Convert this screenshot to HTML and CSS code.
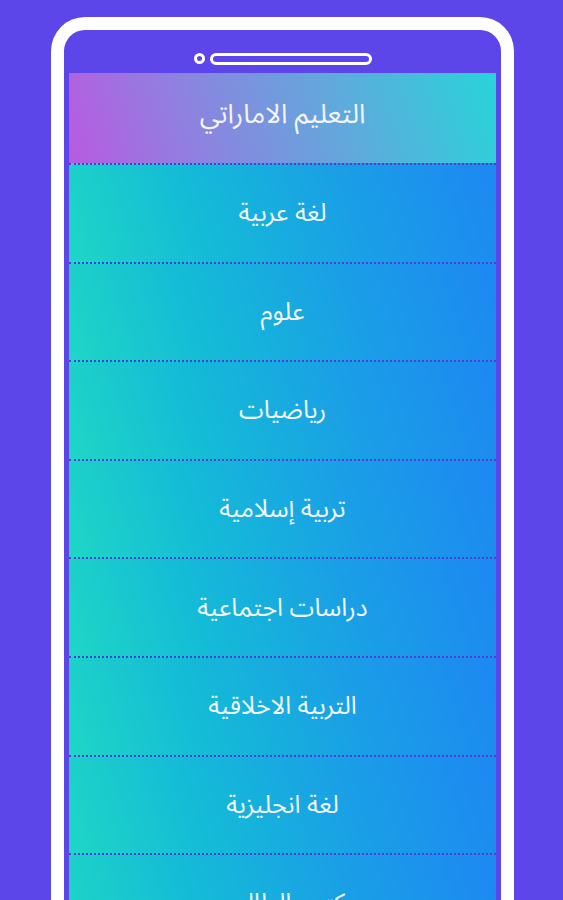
FILE: index.html
```html
<!DOCTYPE html>
<html lang="ar">
<head>
  <meta charset="utf-8">
  <title>التعليم الاماراتي</title>
  <link rel="stylesheet" href="styles.css">
</head>
<body>
  <div class="phone">
    <div class="speaker">
      <span class="camera"></span>
      <span class="grille"></span>
    </div>
    <div class="screen">
      <div class="header">التعليم الاماراتي</div>
      <div class="subject">لغة عربية</div>
      <div class="subject">علوم</div>
      <div class="subject">رياضيات</div>
      <div class="subject">تربية إسلامية</div>
      <div class="subject">دراسات اجتماعية</div>
      <div class="subject">التربية الاخلاقية</div>
      <div class="subject">لغة انجليزية</div>
      <div class="subject">كتب الطالب</div>
    </div>
  </div>
</body>
</html>
```

FILE: styles.css
```css
html, body {
  margin: 0;
  height: 900px;
  overflow: hidden;
}

body {
  background-color: #5c45e9;
  font-family: "Noto Sans Arabic", "Noto Sans", "DejaVu Sans", sans-serif;
}

.phone {
  box-sizing: border-box;
  width: 463px;
  height: 960px;
  margin: 17px 0 0 51px;
  border: 13px solid #fff;
  border-bottom: none;
  border-radius: 34px 34px 0 0;
  padding: 0 5px;
}

.speaker {
  display: flex;
  justify-content: center;
  align-items: center;
  gap: 5px;
  height: 43px;
  padding-top: 14px;
  box-sizing: border-box;
}

.camera {
  width: 5px;
  height: 5px;
  border: 3px solid #fff;
  border-radius: 50%;
}

.grille {
  width: 156px;
  height: 6px;
  border: 3px solid #fff;
  border-radius: 8px;
}

.screen {
  direction: rtl;
  display: flex;
  flex-direction: column;
}

.header {
  height: 90px;
  display: flex;
  align-items: center;
  justify-content: center;
  padding-bottom: 8px;
  box-sizing: border-box;
  color: #f4f4ff;
  font-size: 27px;
  background: linear-gradient(72deg, #b95ae0 0%, #9080e0 28%, #62a8dc 62%, #27d4da 100%);
}

.subject {
  height: 98.6px;
  box-sizing: border-box;
  border-top: 2px dotted #4a3fd6;
  display: flex;
  align-items: center;
  justify-content: center;
  color: #f2f6ff;
  font-size: 25px;
  background: linear-gradient(72deg, #1fd6c6 0%, #14bcd6 30%, #1a9fe6 65%, #1d88f2 100%);
}
```
